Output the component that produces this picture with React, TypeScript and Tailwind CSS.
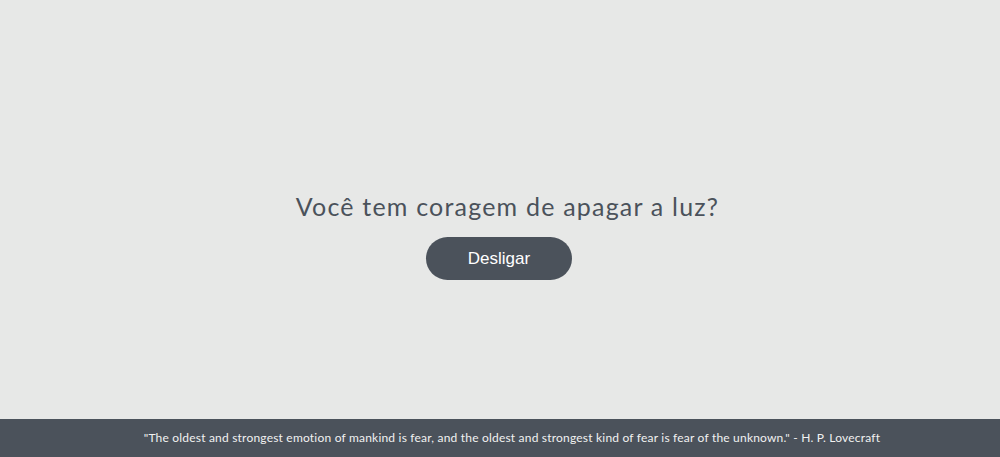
const App: React.FC = () => {
  return (
    <div className="flex h-[457px] w-full flex-col bg-[#e7e8e7] font-['Lato',sans-serif]">
      <main className="flex flex-1 flex-col items-center pt-[190px]">
        <h1 className="ml-[15px] text-[25px] leading-[32px] tracking-[1.2px] text-[#4b525b]">
          Você tem coragem de apagar a luz?
        </h1>
        <button className="mt-[15px] ml-[-2px] h-[43px] w-[146px] rounded-full bg-[#4b525b] font-['Liberation_Sans',sans-serif] text-[17px] text-white">
          Desligar
        </button>
      </main>
      <footer className="flex h-[38px] items-center justify-center bg-[#4b525b]">
        <p className="ml-[24px] text-[12px] tracking-[0.2px] text-[#f1f1f1]">
          "The oldest and strongest emotion of mankind is fear, and the oldest and strongest kind of fear is fear of the
          unknown." - H. P. Lovecraft
        </p>
      </footer>
    </div>
  );
};

export default App;
